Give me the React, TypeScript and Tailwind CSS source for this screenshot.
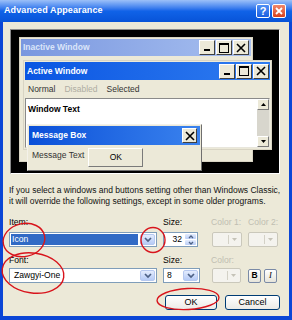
import React from "react";

type Glyph = "min" | "max" | "close";

const CaptionGlyph = ({ kind }: { kind: Glyph }) => {
  if (kind === "min")
    return (
      <svg width="9" height="9" viewBox="0 0 9 9">
        <rect x="1" y="6" width="6" height="2" fill="#000" />
      </svg>
    );
  if (kind === "max")
    return (
      <svg width="10" height="10" viewBox="0 0 10 10">
        <rect x="0.5" y="0.5" width="9" height="9" fill="none" stroke="#000" />
        <rect x="0" y="0" width="10" height="2" fill="#000" />
      </svg>
    );
  return (
    <svg width="10" height="10" viewBox="0 0 10 10">
      <path d="M1 1 L9 9 M9 1 L1 9" stroke="#000" strokeWidth="1.6" />
    </svg>
  );
};

const CaptionButton = ({ kind, size = "w-[16px] h-[15px]" }: { kind: Glyph; size?: string }) => (
  <div
    className={`${size} flex items-center justify-center bg-[#ece9d8] border border-t-white border-l-white border-b-[#404040] border-r-[#404040]`}
  >
    <CaptionGlyph kind={kind} />
  </div>
);

const Chevron = ({ color = "#4d6185" }: { color?: string }) => (
  <svg width="8" height="6" viewBox="0 0 8 6">
    <path d="M1 1 L4 4 L7 1" fill="none" stroke={color} strokeWidth="1.7" />
  </svg>
);

const ComboButton = () => (
  <div className="w-[15px] h-full flex items-center justify-center rounded-[2px] bg-gradient-to-b from-[#e4ecfd] to-[#b6cbf6] border border-[#b6c8ef]">
    <Chevron />
  </div>
);

const DisabledColor = ({ w }: { w: string }) => (
  <div className={`${w} h-[15px] flex items-center justify-end pr-[4px] gap-[3px] rounded-[2px] bg-[#f4f3ee] border border-[#cac8bb]`}>
    <span className="w-px h-[9px] bg-[#d3d1c6]" />
    <svg width="5" height="3" viewBox="0 0 5 3">
      <path d="M0 0 L5 0 L2.5 3 Z" fill="#c5c3b8" />
    </svg>
  </div>
);

const XpButton = ({ label, w }: { label: string; w: string }) => (
  <div
    className={`${w} h-[15px] flex items-center justify-center rounded-[3px] border border-[#003c74] bg-gradient-to-b from-white to-[#ecebe6] text-[9px] text-black`}
  >
    {label}
  </div>
);

export default function App() {
  return (
    <div className="relative w-[292px] h-[320px] overflow-hidden bg-[#0b46d6] font-['Liberation_Sans',Arial,sans-serif]">
      {/* title bar */}
      <div className="h-[22px] flex items-center pl-[4px] pr-[6px] bg-gradient-to-b from-[#9cc0f8] via-[#1063e8] to-[#0853d8]">
        <span className="flex-1 text-[9px] font-bold text-white tracking-[0.1px]">Advanced Appearance</span>
        <div className="flex gap-[2px]">
          <div className="w-[14px] h-[14px] flex items-center justify-center rounded-[2px] border border-white bg-gradient-to-b from-[#4f8ff5] to-[#1b5fe0] text-[11px] font-bold text-white leading-none">
            ?
          </div>
          <div className="w-[14px] h-[14px] flex items-center justify-center rounded-[2px] border border-white bg-gradient-to-b from-[#f0866a] to-[#d7401a]">
            <svg width="8" height="8" viewBox="0 0 8 8">
              <path d="M1 1 L7 7 M7 1 L1 7" stroke="#fff" strokeWidth="1.8" />
            </svg>
          </div>
        </div>
      </div>

      {/* client area */}
      <div className="mx-[3px] h-[294px] bg-[#ece9d8] flex flex-col text-black">
        {/* preview */}
        <div className="ml-[7px] mt-[7px] w-[270px] h-[145px] border border-t-[#8a8a8a] border-l-[#8a8a8a] border-b-white border-r-white">
          <div className="relative w-full h-full bg-black overflow-hidden">
            {/* inactive window */}
            <div className="absolute left-[8px] top-[7px] w-[234px] h-[125px] bg-[#ece9d8] border border-[#d8d4c4] p-[1px]">
              <div className="h-[17px] flex items-center pl-[2px] pr-[2px] bg-gradient-to-r from-[#7a97df] to-[#a8c0f0]">
                <span className="flex-1 text-[8.5px] font-bold text-[#dbe5f9]">Inactive Window</span>
                <div className="flex gap-[1px]">
                  <CaptionButton kind="min" />
                  <CaptionButton kind="max" />
                  <CaptionButton kind="close" />
                </div>
              </div>
            </div>

            {/* active window */}
            <div className="absolute left-[12px] top-[30px] w-[249px] h-[90px] bg-[#ece9d8] border border-[#d8d4c4] p-[1px] flex flex-col">
              <div className="h-[18px] flex items-center pl-[2px] pr-[1px] bg-gradient-to-r from-[#0a55e2] to-[#2f7cf0]">
                <span className="flex-1 text-[8.5px] font-bold text-white">Active Window</span>
                <div className="flex gap-[1px]">
                  <CaptionButton kind="min" />
                  <CaptionButton kind="max" />
                  <CaptionButton kind="close" />
                </div>
              </div>
              <div className="h-[18px] flex items-center gap-[9px] pl-[3px] text-[8.5px]">
                <span className="text-[#333]">Normal</span>
                <span className="text-[#aeaca2]">Disabled</span>
                <span className="text-[#333]">Selected</span>
              </div>
              <div className="flex-1 flex bg-white border border-t-[#8a8a8a] border-l-[#8a8a8a] border-b-[#e8e6dc] border-r-[#e8e6dc]">
                <div className="flex-1 pl-[2px] pt-[4px] text-[8.5px] font-bold">Window Text</div>
                <div className="w-[12px] flex flex-col bg-[#d8d6cd]">
                  <div className="h-[11px] flex items-center justify-center bg-[#ece9d8] border border-t-white border-l-white border-b-[#7a7a7a] border-r-[#7a7a7a]">
                    <svg width="5" height="3" viewBox="0 0 5 3">
                      <path d="M0 3 L5 3 L2.5 0 Z" fill="#000" />
                    </svg>
                  </div>
                  <div className="flex-1" />
                  <div className="h-[11px] flex items-center justify-center bg-[#ece9d8] border border-t-white border-l-white border-b-[#7a7a7a] border-r-[#7a7a7a]">
                    <svg width="5" height="3" viewBox="0 0 5 3">
                      <path d="M0 0 L5 0 L2.5 3 Z" fill="#000" />
                    </svg>
                  </div>
                </div>
              </div>
            </div>

            {/* message box */}
            <div className="absolute left-[16px] top-[94px] w-[175px] h-[47px] bg-[#ece9d8] border border-t-[#f4f2ea] border-l-[#f4f2ea] border-b-[#6f6f6f] border-r-[#6f6f6f] p-[1px] flex flex-col">
              <div className="h-[19px] flex items-center pl-[3px] pr-[3px] bg-gradient-to-r from-[#0a4fd8] to-[#3a82ee]">
                <span className="flex-1 text-[8.5px] font-bold text-white">Message Box</span>
                <CaptionButton kind="close" size="w-[15px] h-[15px]" />
              </div>
              <div className="flex-1 flex items-start pl-[3px] pt-[3px] gap-[4px]">
                <span className="text-[8.5px] text-[#333] mt-[1px]">Message Text</span>
                <div className="w-[55px] h-[19px] flex items-center justify-center text-[8.5px] bg-[#ece9d8] border border-t-white border-l-white border-b-[#7a7a7a] border-r-[#7a7a7a]">
                  OK
                </div>
              </div>
            </div>
          </div>
        </div>

        {/* description */}
        <p className="mt-[11px] ml-[6px] text-[8.5px] leading-[11px] text-[#111]">
          If you select a windows and buttons setting other than Windows Classic,
          <br />
          it will override the following settings, except in some older programs.
        </p>

        {/* item labels */}
        <div className="mt-[10px] ml-[6px] flex text-[8.6px] leading-[10px]">
          <span className="w-[154px]">Item:</span>
          <span className="w-[48px]">Size:</span>
          <span className="w-[37px] text-[#c0beb2]">Color 1:</span>
          <span className="text-[#c0beb2]">Color 2:</span>
        </div>

        {/* item controls */}
        <div className="mt-[5px] ml-[6px] flex items-center">
          <div className="w-[148px] h-[15px] flex items-stretch bg-white border border-[#7f9db9] p-[1px] gap-[2px]">
            <div className="flex-1 flex items-center pl-[1px] bg-[#316ac5] text-[8.6px] text-white">Icon</div>
            <ComboButton />
          </div>
          <div className="ml-[6px] w-[35px] h-[15px] flex items-stretch bg-white border border-[#7f9db9] p-[1px]">
            <div className="flex-1 flex items-center justify-end pr-[3px] text-[8.6px]">32</div>
            <div className="w-[11px] flex flex-col gap-px">
              <div className="flex-1 flex items-center justify-center rounded-[1px] bg-gradient-to-b from-[#e4ecfd] to-[#b9cdf6]">
                <svg width="6" height="4" viewBox="0 0 6 4">
                  <path d="M1 3 L3 1 L5 3" fill="none" stroke="#4d6185" strokeWidth="1.3" />
                </svg>
              </div>
              <div className="flex-1 flex items-center justify-center rounded-[1px] bg-gradient-to-b from-[#e4ecfd] to-[#b9cdf6]">
                <svg width="6" height="4" viewBox="0 0 6 4">
                  <path d="M1 1 L3 3 L5 1" fill="none" stroke="#4d6185" strokeWidth="1.3" />
                </svg>
              </div>
            </div>
          </div>
          <div className="ml-[14px]">
            <DisabledColor w="w-[30px]" />
          </div>
          <div className="ml-[6px]">
            <DisabledColor w="w-[30px]" />
          </div>
        </div>

        {/* font labels */}
        <div className="mt-[8px] ml-[6px] flex text-[8.6px] leading-[10px]">
          <span className="w-[154px]">Font:</span>
          <span className="w-[48px]">Size:</span>
          <span className="text-[#c0beb2]">Color:</span>
        </div>

        {/* font controls */}
        <div className="mt-[3px] ml-[6px] flex items-center">
          <div className="w-[148px] h-[15px] flex items-stretch bg-white border border-[#7f9db9] p-[1px] gap-[2px]">
            <div className="flex-1 flex items-center pl-[3px] text-[8.6px]">Zawgyi-One</div>
            <ComboButton />
          </div>
          <div className="ml-[6px] w-[37px] h-[15px] flex items-stretch bg-white border border-[#7f9db9] p-[1px] gap-[2px]">
            <div className="flex-1 flex items-center pl-[2px] text-[8.6px]">8</div>
            <ComboButton />
          </div>
          <div className="ml-[12px]">
            <DisabledColor w="w-[29px]" />
          </div>
          <div className="ml-[7px] flex gap-[3px]">
            <div className="w-[13px] h-[14px] flex items-center justify-center rounded-[2px] border border-[#7a8aa6] bg-gradient-to-b from-white to-[#e6e4da] text-[8.5px] font-bold">
              B
            </div>
            <div className="w-[13px] h-[14px] flex items-center justify-center rounded-[2px] border border-[#7a8aa6] bg-gradient-to-b from-white to-[#e6e4da] text-[8.5px] italic font-['Liberation_Serif',serif]">
              I
            </div>
          </div>
        </div>

        {/* dialog buttons */}
        <div className="mt-[12px] ml-[162px] flex gap-[8px]">
          <XpButton label="OK" w="w-[52px]" />
          <XpButton label="Cancel" w="w-[55px]" />
        </div>
      </div>

      {/* red marker circles drawn over the screenshot */}
      <svg className="absolute left-0 top-0 pointer-events-none" width="292" height="320" viewBox="0 0 292 320">
        <g fill="none" stroke="#d8141c" strokeWidth="1.4">
          <ellipse cx="24" cy="240" rx="21" ry="16.5" transform="rotate(-12 24 240)" />
          <ellipse cx="33" cy="273" rx="31" ry="20" transform="rotate(8 33 273)" />
          <ellipse cx="153" cy="240" rx="12" ry="12.5" />
          <ellipse cx="188" cy="299" rx="31" ry="10.5" transform="rotate(-3 188 299)" />
        </g>
      </svg>
    </div>
  );
}
